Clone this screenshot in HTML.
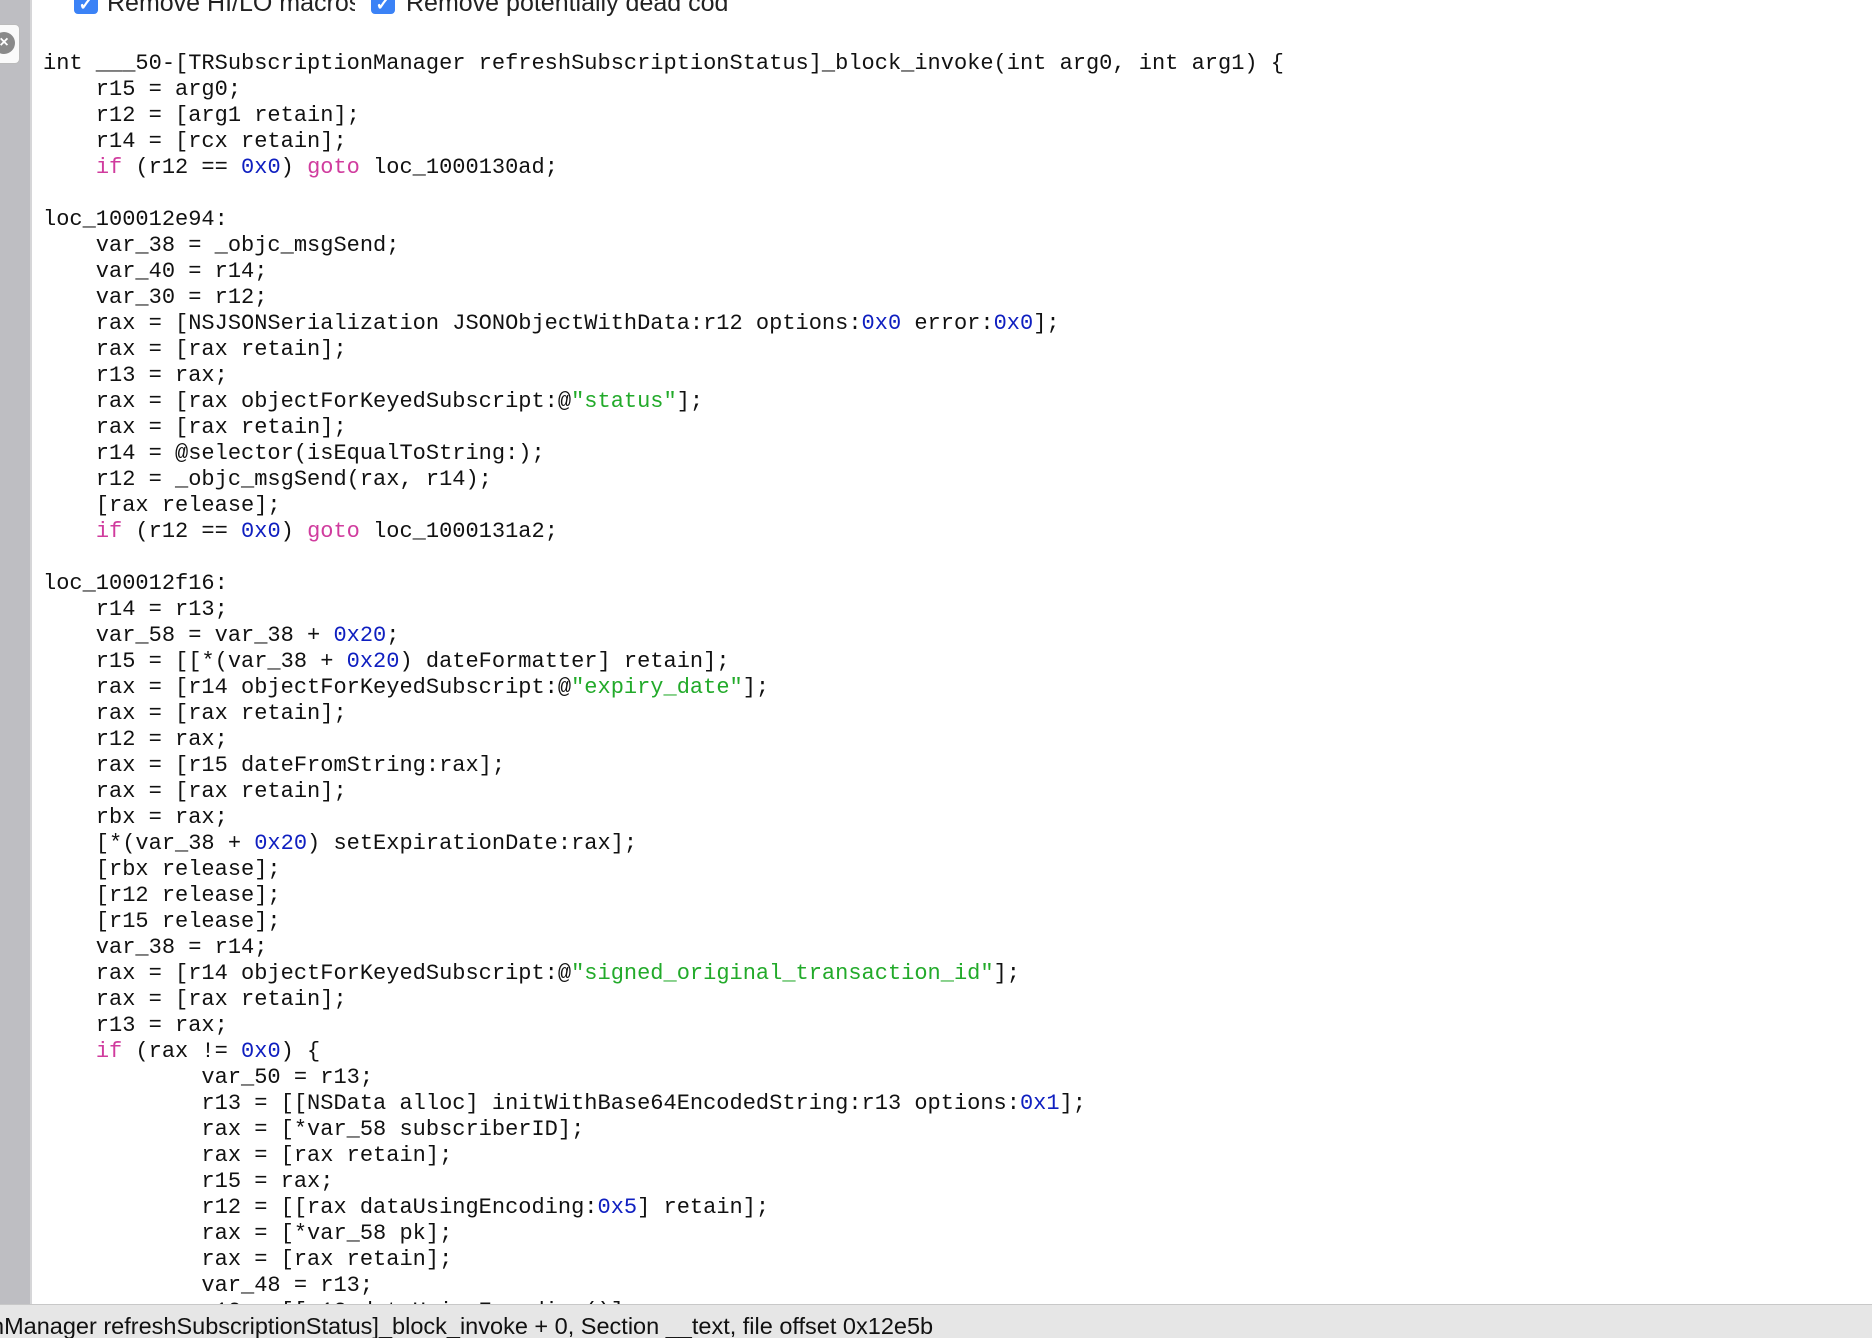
<!DOCTYPE html>
<html><head><meta charset="utf-8"><style>
html,body{margin:0;padding:0;width:1872px;height:1338px;overflow:hidden;background:#fff;position:relative}
.gut{position:absolute;left:0;top:0;width:30px;height:1304px;background:#bebec2;border-right:2px solid #d6d6d8}
.code{position:absolute;left:43px;top:51px;font-family:"Liberation Mono",monospace;font-size:22px;line-height:26px;white-space:pre;color:#111}
.k{color:#d03c9e}.n{color:#0f1fc0}.s{color:#22aa2a}
.status{position:absolute;left:0;top:1304px;width:1872px;height:34px;background:#e6e6e6;border-top:1px solid #c8c8c8;overflow:hidden}
.status span{position:absolute;left:-9px;top:4px;font-family:"Liberation Sans",sans-serif;font-size:23.5px;line-height:34px;white-space:pre;color:#111}
.cb{position:absolute;top:-10px;width:24px;height:24px;background:#3b82f6;border-radius:4px;color:#fff;font:bold 18px "Liberation Sans",sans-serif;text-align:center;line-height:28px}
.lbl{position:absolute;top:-11px;font-family:"Liberation Sans",sans-serif;font-size:25px;color:#222;white-space:pre;overflow:hidden}
.close{position:absolute;left:-8px;top:24px;width:26px;height:38px;background:#fafafa;border:1px solid #bbb;border-radius:5px}
.close i{position:absolute;left:0px;top:7px;width:22px;height:22px;border-radius:50%;background:#8a8a8a;color:#fff;font:bold 16px "Liberation Sans",sans-serif;font-style:normal;text-align:center;line-height:22px}
</style></head><body>
<div class="gut"></div>
<div class="close"><i>×</i></div>
<div class="cb" style="left:74px">✓</div><div class="lbl" style="left:107px;width:248px">Remove HI/LO macros</div>
<div class="cb" style="left:371px">✓</div><div class="lbl" style="left:406px;width:330px">Remove potentially dead cod</div>
<div class="code">int ___50-[TRSubscriptionManager refreshSubscriptionStatus]_block_invoke(int arg0, int arg1) {
    r15 = arg0;
    r12 = [arg1 retain];
    r14 = [rcx retain];
    <span class="k">if</span> (r12 == <span class="n">0x0</span>) <span class="k">goto</span> loc_1000130ad;

loc_100012e94:
    var_38 = _objc_msgSend;
    var_40 = r14;
    var_30 = r12;
    rax = [NSJSONSerialization JSONObjectWithData:r12 options:<span class="n">0x0</span> error:<span class="n">0x0</span>];
    rax = [rax retain];
    r13 = rax;
    rax = [rax objectForKeyedSubscript:@<span class="s">"status"</span>];
    rax = [rax retain];
    r14 = @selector(isEqualToString:);
    r12 = _objc_msgSend(rax, r14);
    [rax release];
    <span class="k">if</span> (r12 == <span class="n">0x0</span>) <span class="k">goto</span> loc_1000131a2;

loc_100012f16:
    r14 = r13;
    var_58 = var_38 + <span class="n">0x20</span>;
    r15 = [[*(var_38 + <span class="n">0x20</span>) dateFormatter] retain];
    rax = [r14 objectForKeyedSubscript:@<span class="s">"expiry_date"</span>];
    rax = [rax retain];
    r12 = rax;
    rax = [r15 dateFromString:rax];
    rax = [rax retain];
    rbx = rax;
    [*(var_38 + <span class="n">0x20</span>) setExpirationDate:rax];
    [rbx release];
    [r12 release];
    [r15 release];
    var_38 = r14;
    rax = [r14 objectForKeyedSubscript:@<span class="s">"signed_original_transaction_id"</span>];
    rax = [rax retain];
    r13 = rax;
    <span class="k">if</span> (rax != <span class="n">0x0</span>) {
            var_50 = r13;
            r13 = [[NSData alloc] initWithBase64EncodedString:r13 options:<span class="n">0x1</span>];
            rax = [*var_58 subscriberID];
            rax = [rax retain];
            r15 = rax;
            r12 = [[rax dataUsingEncoding:<span class="n">0x5</span>] retain];
            rax = [*var_58 pk];
            rax = [rax retain];
            var_48 = r13;
            r12 = [[r12 dataUsingEncoding()];</div>
<div class="status"><span>nManager refreshSubscriptionStatus]_block_invoke + 0, Section __text, file offset 0x12e5b</span></div>
</body></html>
